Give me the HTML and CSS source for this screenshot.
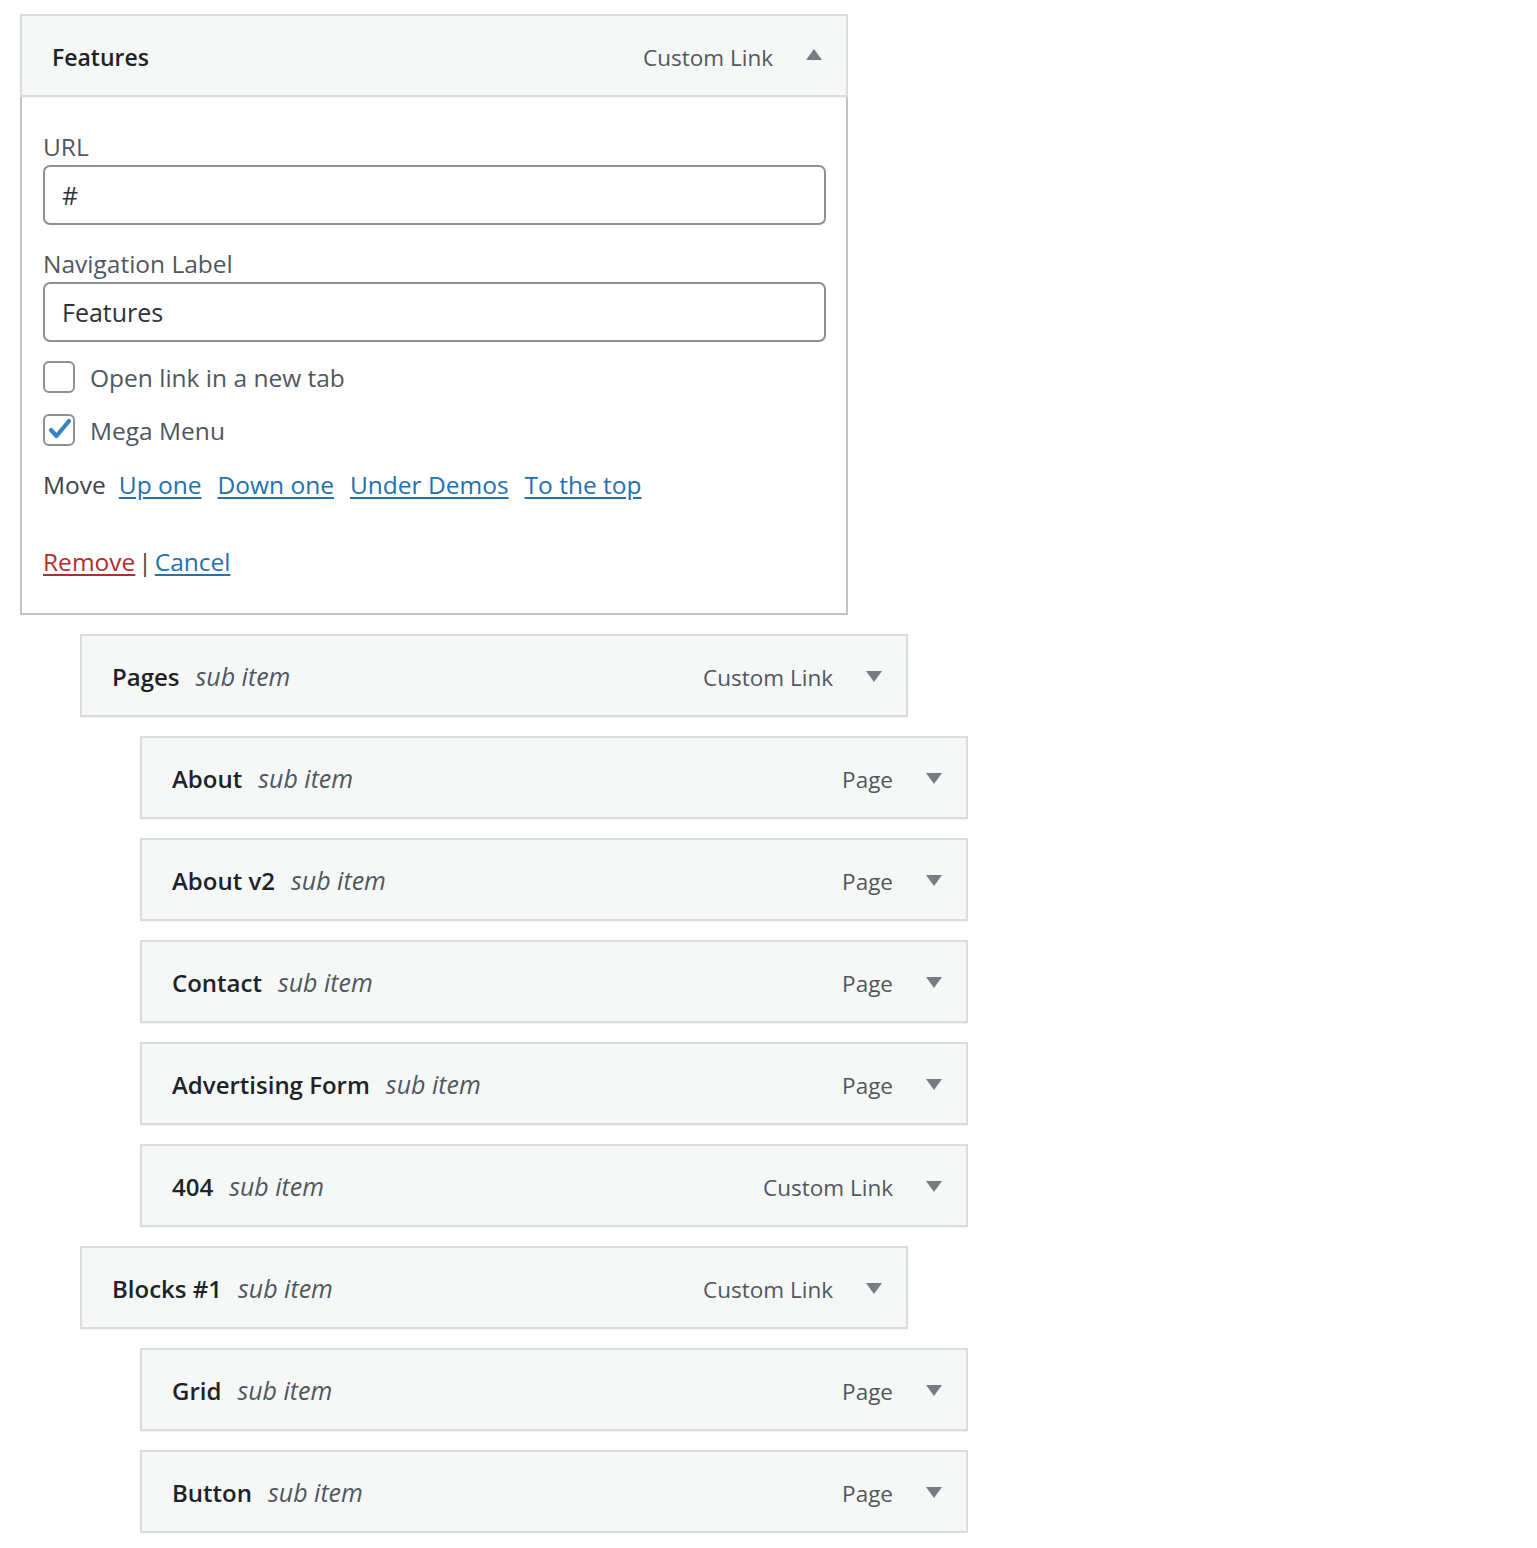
FILE: index.html
```html
<!DOCTYPE html>
<html lang="en">
<head>
<meta charset="utf-8">
<title>Menu structure</title>
<link rel="stylesheet" href="styles.css">
</head>
<body>
<div class="menu">
  <div class="item depth-0 open">
    <div class="handle">
      <span class="title"><span class="name">Features</span></span>
      <span class="controls"><span class="type">Custom Link</span><svg class="arrow arrow-up" viewBox="0 0 16 11" width="16" height="11"><polygon points="8,0 16,11 0,11"/></svg></span>
    </div>
    <div class="settings">
      <label class="label label-url">URL</label>
      <div class="input">#</div>
      <label class="label label-nav">Navigation Label</label>
      <div class="input">Features</div>
      <div class="check-row first">
        <span class="checkbox"></span><span class="check-text">Open link in a new tab</span>
      </div>
      <div class="check-row">
        <span class="checkbox"><svg viewBox="0 0 32 32" width="32" height="32"><polyline points="8,16 13.5,22 26,7" fill="none" stroke="#3582c4" stroke-width="4.2" stroke-linecap="round" stroke-linejoin="round"/></svg></span><span class="check-text">Mega Menu</span>
      </div>
      <div class="move-row">
        <span class="move-label">Move</span>
        <a class="link" href="#">Up one</a>
        <a class="link" href="#">Down one</a>
        <a class="link" href="#">Under Demos</a>
        <a class="link" href="#">To the top</a>
      </div>
      <div class="actions">
        <a class="remove" href="#">Remove</a><span class="sep">|</span><a class="link" href="#">Cancel</a>
      </div>
    </div>
  </div>

  <div class="item depth-1">
    <div class="handle">
      <span class="title"><span class="name">Pages</span><span class="sub">sub item</span></span>
      <span class="controls"><span class="type">Custom Link</span><svg class="arrow" viewBox="0 0 16 11" width="16" height="11"><polygon points="0,0 16,0 8,11"/></svg></span>
    </div>
  </div>
  <div class="item depth-2">
    <div class="handle">
      <span class="title"><span class="name">About</span><span class="sub">sub item</span></span>
      <span class="controls"><span class="type">Page</span><svg class="arrow" viewBox="0 0 16 11" width="16" height="11"><polygon points="0,0 16,0 8,11"/></svg></span>
    </div>
  </div>
  <div class="item depth-2">
    <div class="handle">
      <span class="title"><span class="name">About v2</span><span class="sub">sub item</span></span>
      <span class="controls"><span class="type">Page</span><svg class="arrow" viewBox="0 0 16 11" width="16" height="11"><polygon points="0,0 16,0 8,11"/></svg></span>
    </div>
  </div>
  <div class="item depth-2">
    <div class="handle">
      <span class="title"><span class="name">Contact</span><span class="sub">sub item</span></span>
      <span class="controls"><span class="type">Page</span><svg class="arrow" viewBox="0 0 16 11" width="16" height="11"><polygon points="0,0 16,0 8,11"/></svg></span>
    </div>
  </div>
  <div class="item depth-2">
    <div class="handle">
      <span class="title"><span class="name">Advertising Form</span><span class="sub">sub item</span></span>
      <span class="controls"><span class="type">Page</span><svg class="arrow" viewBox="0 0 16 11" width="16" height="11"><polygon points="0,0 16,0 8,11"/></svg></span>
    </div>
  </div>
  <div class="item depth-2">
    <div class="handle">
      <span class="title"><span class="name">404</span><span class="sub">sub item</span></span>
      <span class="controls"><span class="type">Custom Link</span><svg class="arrow" viewBox="0 0 16 11" width="16" height="11"><polygon points="0,0 16,0 8,11"/></svg></span>
    </div>
  </div>
  <div class="item depth-1">
    <div class="handle">
      <span class="title"><span class="name">Blocks #1</span><span class="sub">sub item</span></span>
      <span class="controls"><span class="type">Custom Link</span><svg class="arrow" viewBox="0 0 16 11" width="16" height="11"><polygon points="0,0 16,0 8,11"/></svg></span>
    </div>
  </div>
  <div class="item depth-2">
    <div class="handle">
      <span class="title"><span class="name">Grid</span><span class="sub">sub item</span></span>
      <span class="controls"><span class="type">Page</span><svg class="arrow" viewBox="0 0 16 11" width="16" height="11"><polygon points="0,0 16,0 8,11"/></svg></span>
    </div>
  </div>
  <div class="item depth-2">
    <div class="handle">
      <span class="title"><span class="name">Button</span><span class="sub">sub item</span></span>
      <span class="controls"><span class="type">Page</span><svg class="arrow" viewBox="0 0 16 11" width="16" height="11"><polygon points="0,0 16,0 8,11"/></svg></span>
    </div>
  </div>
</div>
</body>
</html>
```

FILE: styles.css
```css
* { box-sizing: border-box; }

body {
  margin: 0;
  background: #ffffff;
  font-family: "Open Sans", "Noto Sans", "Liberation Sans", sans-serif;
  font-size: 22px;
  color: #3c434a;
}

.menu {
  display: flex;
  flex-direction: column;
  gap: 19px;
  padding: 14px 0 0 20px;
}

.item {
  width: 828px;
}
.depth-1 { margin-left: 60px; }
.depth-2 { margin-left: 120px; }

.handle {
  height: 83px;
  display: flex;
  align-items: center;
  justify-content: space-between;
  background: #f6f7f7;
  border: 2px solid #dcdcde;
  box-shadow: 0 1px 1px rgba(0, 0, 0, 0.04);
  padding: 0 24px 0 30px;
}

.title {
  display: flex;
  align-items: baseline;
  gap: 16px;
}
.name {
  font-weight: 600;
  color: #1d2327;
  font-size: 24px;
}
.depth-0 .name { font-size: 23px; padding-top: 2px; }
.sub {
  font-style: italic;
  color: #50575e;
  font-size: 25px;
}

.controls {
  display: flex;
  align-items: center;
  gap: 33px;
}
.type {
  color: #50575e;
  font-size: 22.5px;
  padding-top: 3px;
}
.arrow {
  fill: #787c82;
  margin-top: 1px;
}
.arrow-up { margin-top: -3px; }

.settings {
  border: 2px solid #c3c4c7;
  border-top: none;
  padding: 35px 20px 36px 21px;
  display: flex;
  flex-direction: column;
  align-items: flex-start;
  font-size: 24.5px;
}

.label {
  display: block;
  line-height: 30px;
  color: #50575e;
}
.label-nav { margin-top: 24px; }

.input {
  width: 100%;
  height: 60px;
  margin-top: 3px;
  border: 2px solid #8c8f94;
  border-radius: 7px;
  padding: 0 17px;
  display: flex;
  align-items: center;
  color: #2c3338;
  font-size: 25px;
}

.check-row {
  display: flex;
  align-items: center;
  gap: 15px;
  height: 32px;
  margin-top: 21px;
}
.check-row.first { margin-top: 19px; }
.checkbox {
  width: 32px;
  height: 32px;
  border: 2px solid #8c8f94;
  border-radius: 6px;
  background: #fff;
  position: relative;
}
.checkbox svg {
  position: absolute;
  left: -2px;
  top: -2px;
}
.check-text {
  color: #50575e;
}

.move-row {
  margin-top: 24px;
  line-height: 30px;
  display: flex;
  gap: 16px;
}
.move-label { color: #3c434a; margin-right: -3px; }

.link {
  color: #2271b1;
  text-decoration: underline;
  text-underline-offset: 3px;
}

.actions {
  margin-top: 47px;
  line-height: 30px;
  display: flex;
  align-items: center;
}
.remove {
  color: #b32d2e;
  text-decoration: underline;
  text-underline-offset: 3px;
}
.sep {
  color: #3c434a;
  margin: 0 3px;
}
```
